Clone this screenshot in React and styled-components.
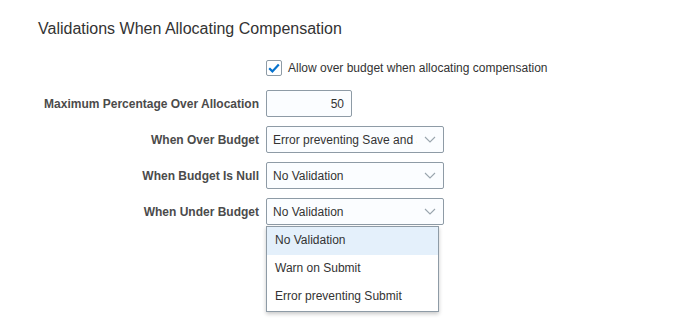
import React from "react";
import styled, { createGlobalStyle } from "styled-components";

const Global = createGlobalStyle`
  html, body { margin: 0; padding: 0; background: #fff; }
  body { font-family: "Liberation Sans", Arial, sans-serif; color: #333; }
`;

const Page = styled.div`
  padding: 19px 0 0 38px;
  width: 686px;
  height: 333px;
  box-sizing: border-box;
`;

const Title = styled.h1`
  margin: 0;
  font-size: 16px;
  line-height: 20px;
  font-weight: normal;
  color: #333;
`;

const Form = styled.div`
  margin-top: 15px;
  display: grid;
  grid-template-columns: 221px 1fr;
  column-gap: 7px;
  row-gap: 9px;
  grid-auto-rows: 27px;
  align-items: center;
`;

const Label = styled.div`
  text-align: right;
  font-size: 12px;
  font-weight: bold;
  color: #4b4b4b;
  white-space: nowrap;
`;

const CheckRow = styled.label`
  display: flex;
  align-items: center;
  gap: 6px;
  font-size: 12px;
  color: #333;
`;

const CheckBox = styled.span`
  width: 14px;
  height: 14px;
  border: 1px solid #8e9ba6;
  border-radius: 2px;
  background: #fff;
  display: flex;
  align-items: center;
  justify-content: center;
`;

const NumberBox = styled.div`
  width: 86px;
  height: 27px;
  box-sizing: border-box;
  border: 1px solid #8e9ba6;
  border-radius: 2px;
  background: #fbfdff;
  font-size: 12px;
  color: #333;
  display: flex;
  align-items: center;
  justify-content: flex-end;
  padding-right: 7px;
`;

const SelectWrap = styled.div`
  position: relative;
  width: 178px;
  height: 27px;
`;

const SelectBox = styled.div`
  width: 100%;
  height: 100%;
  box-sizing: border-box;
  border: 1px solid #8e9ba6;
  border-radius: 2px;
  background: #fbfdff;
  display: flex;
  align-items: center;
  padding-left: 6px;
  font-size: 12px;
  color: #333;
`;

const SelectText = styled.span`
  flex: 1;
  overflow: hidden;
  white-space: nowrap;
`;

const Chevron = styled.span`
  width: 26px;
  flex: none;
  display: flex;
  justify-content: center;
  align-items: center;
`;

const Menu = styled.div`
  position: absolute;
  left: 0;
  top: 28px;
  width: 173px;
  box-sizing: border-box;
  border: 1px solid #8e9ba6;
  background: #fff;
  box-shadow: 0 2px 4px rgba(0, 0, 0, 0.22);
  z-index: 2;
`;

const MenuItem = styled.div`
  height: 28px;
  box-sizing: border-box;
  padding: 0 0 2px 8px;
  display: flex;
  align-items: center;
  font-size: 12px;
  color: #333;
  background: ${(p) => (p.$active ? "#e4f0fb" : "#fff")};
`;

const ChevronIcon = () => (
  <svg width="12" height="7" viewBox="0 0 12 7">
    <path d="M1 1l5 5 5-5" fill="none" stroke="#9aa5ad" strokeWidth="1.1" />
  </svg>
);

const Select = ({ value, children }) => (
  <SelectWrap>
    <SelectBox>
      <SelectText>{value}</SelectText>
      <Chevron>
        <ChevronIcon />
      </Chevron>
    </SelectBox>
    {children}
  </SelectWrap>
);

export default function App() {
  return (
    <>
      <Global />
      <Page>
        <Title>Validations When Allocating Compensation</Title>
        <Form>
          <span />
          <CheckRow>
            <CheckBox>
              <svg width="12" height="10" viewBox="0 0 12 10">
                <path d="M1.2 5.2l3.2 3.2L10.8 1.4" fill="none" stroke="#0572ce" strokeWidth="2.2" />
              </svg>
            </CheckBox>
            Allow over budget when allocating compensation
          </CheckRow>

          <Label>Maximum Percentage Over Allocation</Label>
          <NumberBox>50</NumberBox>

          <Label>When Over Budget</Label>
          <Select value="Error preventing Save and Submit" />

          <Label>When Budget Is Null</Label>
          <Select value="No Validation" />

          <Label>When Under Budget</Label>
          <Select value="No Validation">
            <Menu>
              <MenuItem $active>No Validation</MenuItem>
              <MenuItem>Warn on Submit</MenuItem>
              <MenuItem>Error preventing Submit</MenuItem>
            </Menu>
          </Select>
        </Form>
      </Page>
    </>
  );
}
